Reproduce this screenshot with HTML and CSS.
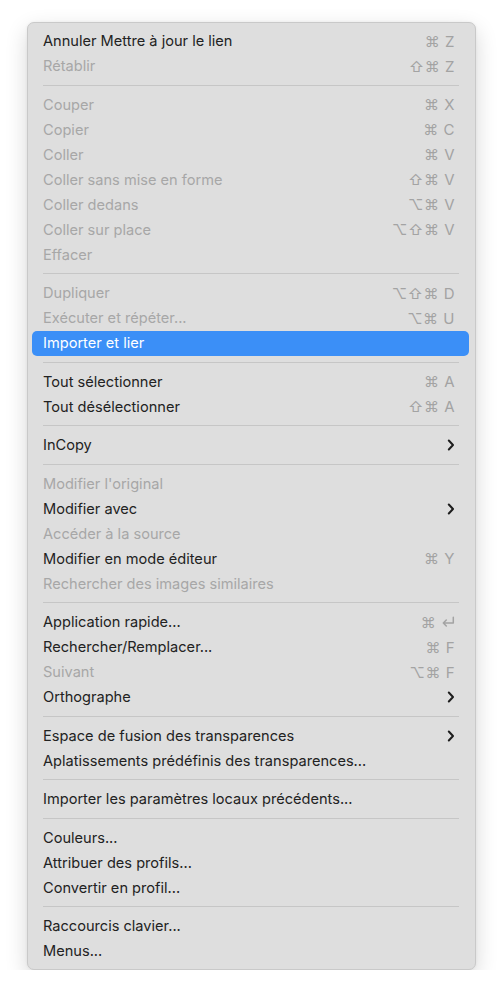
FILE: index.html
```html
<!DOCTYPE html>
<html lang="fr">
<head>
<meta charset="utf-8">
<link rel="stylesheet" href="styles.css">
</head>
<body>
<div class="menu">
  <div class="item"><span class="label">Annuler Mettre à jour le lien</span><span class="sc">⌘ Z</span></div>
  <div class="item off"><span class="label">Rétablir</span><span class="sc">⇧⌘ Z</span></div>
  <div class="sep"></div>
  <div class="item off"><span class="label">Couper</span><span class="sc">⌘ X</span></div>
  <div class="item off"><span class="label">Copier</span><span class="sc">⌘ C</span></div>
  <div class="item off"><span class="label">Coller</span><span class="sc">⌘ V</span></div>
  <div class="item off"><span class="label">Coller sans mise en forme</span><span class="sc">⇧⌘ V</span></div>
  <div class="item off"><span class="label">Coller dedans</span><span class="sc">⌥⌘ V</span></div>
  <div class="item off"><span class="label">Coller sur place</span><span class="sc">⌥⇧⌘ V</span></div>
  <div class="item off"><span class="label">Effacer</span></div>
  <div class="sep"></div>
  <div class="item off"><span class="label">Dupliquer</span><span class="sc">⌥⇧⌘ D</span></div>
  <div class="item off"><span class="label">Exécuter et répéter...</span><span class="sc">⌥⌘ U</span></div>
  <div class="item active"><span class="label">Importer et lier</span></div>
  <div class="sep"></div>
  <div class="item"><span class="label">Tout sélectionner</span><span class="sc">⌘ A</span></div>
  <div class="item"><span class="label">Tout désélectionner</span><span class="sc">⇧⌘ A</span></div>
  <div class="sep"></div>
  <div class="item"><span class="label">InCopy</span><svg class="chev" viewBox="0 0 8 12" width="8" height="12"><path d="M1.8 1.5 L6 6 L1.8 10.5" /></svg></div>
  <div class="sep"></div>
  <div class="item off"><span class="label">Modifier l'original</span></div>
  <div class="item"><span class="label">Modifier avec</span><svg class="chev" viewBox="0 0 8 12" width="8" height="12"><path d="M1.8 1.5 L6 6 L1.8 10.5" /></svg></div>
  <div class="item off"><span class="label">Accéder à la source</span></div>
  <div class="item"><span class="label">Modifier en mode éditeur</span><span class="sc">⌘ Y</span></div>
  <div class="item off"><span class="label">Rechercher des images similaires</span></div>
  <div class="sep"></div>
  <div class="item"><span class="label">Application rapide...</span><span class="sc">⌘ <svg class="ret" viewBox="0 0 14 12" width="14" height="12"><path d="M12.3 1.2 V7 H2.3 M5.3 4 L2.3 7 L5.3 10" /></svg></span></div>
  <div class="item"><span class="label">Rechercher/Remplacer...</span><span class="sc">⌘ F</span></div>
  <div class="item off"><span class="label">Suivant</span><span class="sc">⌥⌘ F</span></div>
  <div class="item"><span class="label">Orthographe</span><svg class="chev" viewBox="0 0 8 12" width="8" height="12"><path d="M1.8 1.5 L6 6 L1.8 10.5" /></svg></div>
  <div class="sep"></div>
  <div class="item"><span class="label">Espace de fusion des transparences</span><svg class="chev" viewBox="0 0 8 12" width="8" height="12"><path d="M1.8 1.5 L6 6 L1.8 10.5" /></svg></div>
  <div class="item"><span class="label">Aplatissements prédéfinis des transparences...</span></div>
  <div class="sep"></div>
  <div class="item"><span class="label">Importer les paramètres locaux précédents...</span></div>
  <div class="sep"></div>
  <div class="item"><span class="label">Couleurs...</span></div>
  <div class="item"><span class="label">Attribuer des profils...</span></div>
  <div class="item"><span class="label">Convertir en profil...</span></div>
  <div class="sep"></div>
  <div class="item"><span class="label">Raccourcis clavier...</span></div>
  <div class="item"><span class="label">Menus...</span></div>
</div>
</body>
</html>
```
FILE: styles.css
```css
html, body {
  margin: 0;
  padding: 0;
  background: #ffffff;
}
body {
  font-family: "Inter", "Roboto", "DejaVu Sans", sans-serif;
  font-size: 14.6px;
  -webkit-font-smoothing: antialiased;
}
.menu {
  box-sizing: border-box;
  width: 449px;
  margin: 22px 0 0 27px;
  padding: 5.5px 0;
  background: #dedede;
  border: 1px solid #c9c9c9;
  border-radius: 7px;
  box-shadow: 0 8px 22px rgba(0, 0, 0, 0.16), 0 0 3px rgba(0, 0, 0, 0.06);
}
.item {
  display: flex;
  align-items: center;
  justify-content: space-between;
  height: 25px;
  margin: 0 6px 0 4px;
  padding: 0 14px 0 11px;
  border-radius: 5px;
  color: #222222;
}
.item.off {
  color: #a7a7a7;
}
.item.active {
  background: #3b8ff7;
  color: #ffffff;
}
.label {
  white-space: nowrap;
}
.sc {
  display: flex;
  align-items: center;
  color: #a3a3a3;
  font-family: "Inter", "DejaVu Sans", sans-serif;
  font-size: 15px;
  letter-spacing: 0.5px;
  white-space: pre;
}
.chev {
  fill: none;
  stroke: #1e1e1e;
  stroke-width: 2;
  stroke-linecap: round;
  stroke-linejoin: round;
}
.ret {
  fill: none;
  stroke: #a3a3a3;
  stroke-width: 1.5;
  stroke-linejoin: round;
  stroke-linecap: round;
}
.sep {
  height: 1px;
  margin: 6.25px 16px 6.25px 15px;
  background: #c6c6c6;
}
```
